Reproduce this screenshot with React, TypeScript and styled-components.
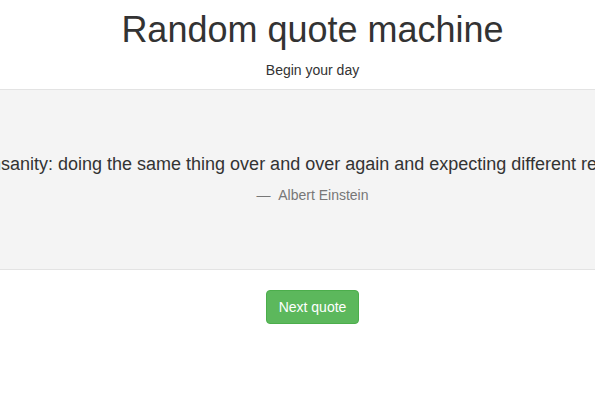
import React from "react";
import styled, { createGlobalStyle } from "styled-components";

const GlobalStyle = createGlobalStyle`
  html, body {
    margin: 0;
    padding: 0;
    background: #ffffff;
    font-family: "Liberation Sans", Arial, sans-serif;
    color: #333333;
    overflow: hidden;
  }
`;

const Page = styled.div`
  width: 625px;
  display: flex;
  flex-direction: column;
  align-items: stretch;
`;

const Header = styled.header`
  display: flex;
  flex-direction: column;
  align-items: center;
  padding-top: 10px;
  padding-bottom: 9px;
`;

const Title = styled.h1`
  margin: 0 0 10px;
  font-size: 36px;
  line-height: 1.1;
  font-weight: 400;
  color: #333333;
`;

const Subtitle = styled.p`
  margin: 0;
  font-size: 14px;
  line-height: 20px;
  color: #333333;
`;

const QuotePanel = styled.section`
  background: #f4f4f4;
  border-top: 1px solid #e3e3e3;
  border-bottom: 1px solid #e3e3e3;
  padding: 62px 0 64px;
  overflow: hidden;
  display: flex;
  flex-direction: column;
  align-items: center;
`;

const QuoteText = styled.p`
  margin: 0 0 8px;
  font-size: 18px;
  line-height: 25.7px;
  white-space: nowrap;
  color: #333333;
`;

const Author = styled.footer`
  font-size: 14px;
  line-height: 20px;
  color: #777777;
  white-space: nowrap;
  &::before {
    content: "\\2014  \\00A0";
  }
`;

const Actions = styled.div`
  display: flex;
  justify-content: center;
  padding-top: 20px;
`;

const Button = styled.button`
  font-family: "Liberation Sans", Arial, sans-serif;
  font-size: 14px;
  line-height: 20px;
  padding: 6px 12px;
  color: #ffffff;
  background: #5cb85c;
  border: 1px solid #4cae4c;
  border-radius: 4px;
  cursor: pointer;
`;

export default function App() {
  return (
    <Page>
      <GlobalStyle />
      <Header>
        <Title>Random quote machine</Title>
        <Subtitle>Begin your day</Subtitle>
      </Header>
      <QuotePanel>
        <QuoteText>
          Insanity: doing the same thing over and over again and expecting different results.
        </QuoteText>
        <Author>Albert Einstein</Author>
      </QuotePanel>
      <Actions>
        <Button type="button">Next quote</Button>
      </Actions>
    </Page>
  );
}
